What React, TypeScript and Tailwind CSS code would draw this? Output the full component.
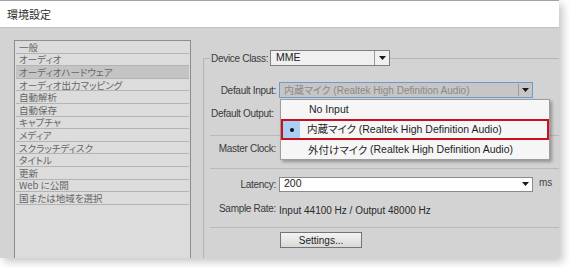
import React from "react";

const jp = "font-['Noto_Sans_CJK_JP',sans-serif] [font-feature-settings:'palt']";

function Arrow() {
  return (
    <svg width="7" height="4" viewBox="0 0 7 4" className="block">
      <path d="M0 0 H7 L3.5 4 Z" fill="#1a1a1a" />
    </svg>
  );
}

const items = [
  "一般",
  "オーディオ",
  "オーディオハードウェア",
  "オーディオ出力マッピング",
  "自動解析",
  "自動保存",
  "キャプチャ",
  "メディア",
  "スクラッチディスク",
  "タイトル",
  "更新",
  "Web に公開",
  "国または地域を選択",
];

function Label({ children }: { children: React.ReactNode }) {
  return (
    <div className="w-[73px] shrink-0 text-right pr-[1px] text-[10px] tracking-[-0.3px] text-[#3a3a3a]">
      {children}
    </div>
  );
}

export default function App() {
  return (
    <div className="w-[570px] h-[268px] bg-white overflow-hidden font-['Liberation_Sans','Noto_Sans_CJK_JP',sans-serif]">
      <div className="w-[559px] h-[258px] flex flex-col overflow-hidden border-t border-[#a3a3a3] shadow-[4px_4px_8px_rgba(0,0,0,0.22)]">
        <div className={`h-[26px] shrink-0 bg-white flex items-center pl-[7px] text-[11px] text-[#2b2b2b] ${jp}`}>
          環境設定
        </div>
        <div className="flex-1 flex bg-[#d3d3d3] border-t border-[#c2c2c2] min-h-0">
          {/* left list */}
          <div className="w-[191px] shrink-0 pl-[14px] pt-[12px] flex flex-col">
            <div className="flex-1 border-l border-t border-r border-[#8e8e8e] bg-[#dcdcdc] pl-[1px] pr-[1px]">
              {items.map((t, i) => (
                <div
                  key={t}
                  className={`h-[12.6px] overflow-hidden flex items-center pl-[3px] border-b border-[#b4b4b4] text-[9.5px] leading-[10px] text-[#666666] ${jp} ${
                    i === 2 ? "bg-[#c4c4c4]" : ""
                  }`}
                >
                  {t}
                </div>
              ))}
            </div>
          </div>

          {/* right panel */}
          <div className="flex-1 pl-[12px] pt-[22px]">
            <div className="relative">
              {/* legend row */}
              <div className="relative z-10 flex items-center h-[16px]">
                <div className="w-[7px]" />
                <div className="w-[60px] h-full flex items-center bg-[#d3d3d3] pl-[1px] text-[10px] tracking-[-0.3px] text-[#3a3a3a]">
                  Device Class:
                </div>
                <div className="w-[120px] h-[16px] flex items-center border border-[#7f7f7f] bg-[#f0f0f0]">
                  <div className="flex-1 pl-[5px] text-[10.5px] text-[#222]">MME</div>
                  <div className="w-[15px] h-full border-l border-[#9a9a9a] flex items-center justify-center">
                    <Arrow />
                  </div>
                </div>
              </div>

              {/* group box */}
              <div className="-mt-[8px] border-l border-t border-[#b5b5b5] h-[210px]">
                {/* Default Input */}
                <div className="flex items-center h-[16px] mt-[23px]">
                  <Label>Default Input:</Label>
                  <div className="ml-[2px] relative">
                    <div className="w-[254px] h-[16px] flex items-center border border-[#6b9cc9] bg-[#c6c6c6]">
                      <div className="flex-1 pl-[4px] text-[10px] text-[#8a8a8a] whitespace-nowrap">
                        <span className={jp}>内蔵マイク</span> (Realtek High Definition Audio)
                      </div>
                      <div className="w-[14px] h-[12px] border-l border-[#9c9c9c] flex items-center justify-center">
                        <Arrow />
                      </div>
                    </div>

                    {/* dropdown menu */}
                    <div className="absolute left-[1px] top-[17px] z-20 w-[270px] h-[61px] border border-[#9d9d9d] bg-[#f6f6f6] shadow-[2px_2px_3px_rgba(0,0,0,0.3)] flex flex-col">
                      <div className="h-[19px] flex items-center pl-[28px] text-[10.5px] text-[#1e1e1e]">
                        No Input
                      </div>
                      <div className="h-[21px] border-2 border-[#c8101e] flex items-center">
                        <div className="w-[17px] h-[17px] bg-[#a9cff2] flex items-center justify-center">
                          <div className="w-[4px] h-[4px] rounded-full bg-[#111]" />
                        </div>
                        <div className="pl-[7px] text-[10.5px] text-[#1e1e1e] whitespace-nowrap">
                          <span className={jp}>内蔵マイク</span> (Realtek High Definition Audio)
                        </div>
                      </div>
                      <div className="h-[19px] flex items-center pl-[27px] text-[10.5px] text-[#1e1e1e] whitespace-nowrap">
                        <span className={jp}>外付けマイク</span>&nbsp;(Realtek High Definition Audio)
                      </div>
                    </div>
                  </div>
                </div>

                {/* Default Output */}
                <div className="flex items-center h-[16px] mt-[7px]">
                  <div className="pl-[7px] text-[10px] tracking-[-0.3px] text-[#3a3a3a]">Default Output:</div>
                </div>

                <div className="ml-[6px] mt-[14px] border-t border-[#b9b9b9]" />

                {/* Master Clock */}
                <div className="flex items-center h-[16px] mt-[4px]">
                  <Label>Master Clock:</Label>
                </div>

                <div className="ml-[6px] mt-[12px] border-t border-[#b9b9b9]" />

                {/* Latency */}
                <div className="flex items-center h-[16px] mt-[7px]">
                  <Label>Latency:</Label>
                  <div className="ml-[2px] w-[254px] h-[15px] flex items-center border border-[#8a8a8a] bg-white">
                    <div className="flex-1 pl-[4px] text-[10.5px] text-[#222]">200</div>
                    <div className="w-[14px] flex items-center justify-center">
                      <Arrow />
                    </div>
                  </div>
                  <div className="ml-[6px] -mt-[3px] text-[10px] text-[#444]">ms</div>
                </div>

                {/* Sample Rate */}
                <div className="flex items-center h-[16px] mt-[10px]">
                  <div className="-mt-[3px]">
                    <Label>Sample Rate:</Label>
                  </div>
                  <div className="ml-[2px] text-[10px] text-[#2a2a2a] whitespace-nowrap">
                    Input 44100 Hz / Output 48000 Hz
                  </div>
                </div>

                <div className="ml-[6px] mt-[9px] border-t border-[#b9b9b9]" />

                {/* Settings button */}
                <div className="mt-[4px] ml-[76px]">
                  <div className="w-[82px] h-[16px] flex items-center justify-center border border-[#747474] bg-gradient-to-b from-[#f4f4f4] to-[#d9d9d9] text-[10px] text-[#1e1e1e]">
                    Settings...
                  </div>
                </div>
              </div>
            </div>
          </div>
        </div>
      </div>
    </div>
  );
}
